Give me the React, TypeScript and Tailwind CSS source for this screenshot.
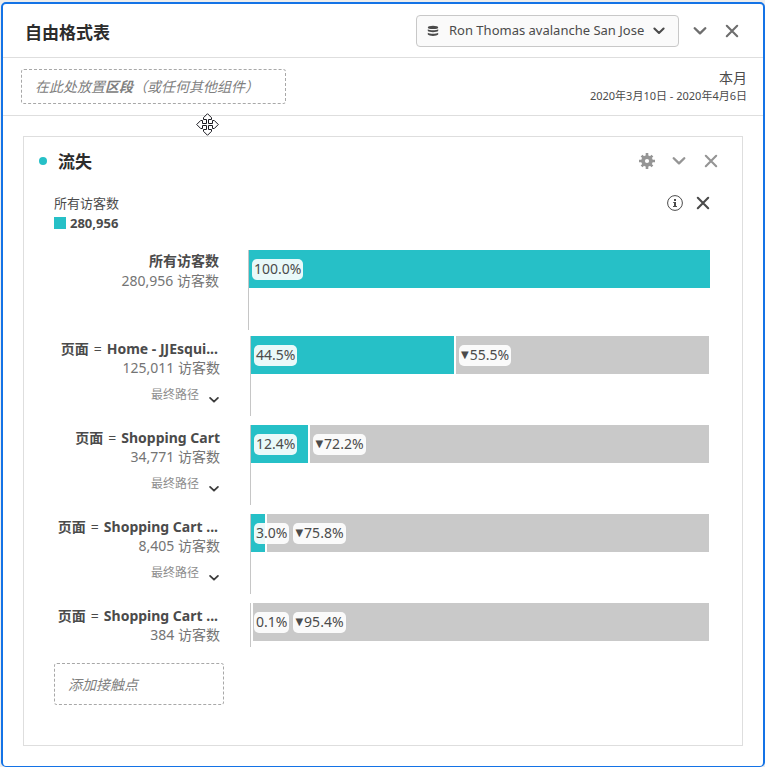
import type { ReactNode } from "react";

type Step = {
  prefix?: string;
  name: string;
  count: string;
  percent: number;
  label: string;
  fallout?: string;
  path?: boolean;
};

const steps: Step[] = [
  { name: "所有访客数", count: "280,956", percent: 100, label: "100.0%" },
  { prefix: "页面", name: "Home - JJEsqui...", count: "125,011", percent: 44.4, label: "44.5%", fallout: "55.5%", path: true },
  { prefix: "页面", name: "Shopping Cart", count: "34,771", percent: 12.4, label: "12.4%", fallout: "72.2%", path: true },
  { prefix: "页面", name: "Shopping Cart ...", count: "8,405", percent: 3, label: "3.0%", fallout: "75.8%", path: true },
  { prefix: "页面", name: "Shopping Cart ...", count: "384", percent: 0, label: "0.1%", fallout: "95.4%" },
];

function Chevron({ className }: { className: string }) {
  return (
    <svg viewBox="0 0 14 14" fill="none" stroke="currentColor" className={className} aria-hidden="true">
      <path d="M2.4 4.6 7 9 11.6 4.6" strokeWidth="2.1" strokeLinecap="round" strokeLinejoin="round" />
    </svg>
  );
}

function Cross({ className }: { className: string }) {
  return (
    <svg viewBox="0 0 14 14" fill="none" stroke="currentColor" className={className} aria-hidden="true">
      <path d="M1.8 1.8 12.2 12.2M12.2 1.8 1.8 12.2" strokeWidth="2.1" strokeLinecap="round" />
    </svg>
  );
}

function Gear() {
  return (
    <svg viewBox="0 0 16 16" className="size-4" aria-hidden="true">
      <g stroke="currentColor" strokeWidth="2.6">
        <path d="M8 0v16M0 8h16" />
        <path d="M2.6 2.6 13.4 13.4M13.4 2.6 2.6 13.4" />
      </g>
      <circle cx="8" cy="8" r="5.8" fill="currentColor" />
      <circle cx="8" cy="8" r="2.1" fill="white" />
    </svg>
  );
}

function Info() {
  return (
    <svg viewBox="0 0 16 16" className="size-4" aria-hidden="true">
      <circle cx="8" cy="8" r="7.4" fill="none" stroke="currentColor" strokeWidth="1" />
      <path d="M7 4h2v2H7zM6.2 7H9v4h1v1H6v-1h1V8h-.8z" fill="currentColor" />
    </svg>
  );
}

function Database() {
  return (
    <svg viewBox="0 0 12 12" className="size-3" fill="currentColor" aria-hidden="true">
      <ellipse cx="6" cy="2.4" rx="5.2" ry="1.7" />
      <path d="M.8 4.2c1.8 1.3 8.6 1.3 10.4 0v1.9c-1.2 1.5-9.2 1.5-10.4 0z" />
      <path d="M.8 7.7c1.8 1.3 8.6 1.3 10.4 0v1.9c-1.2 1.7-9.2 1.7-10.4 0z" />
    </svg>
  );
}

function MoveCursor() {
  return (
    <svg viewBox="0 0 23 23" className="absolute -bottom-[21px] left-[193px] size-[23px]" aria-hidden="true">
      <path
        d="M11.5.7 15.5 4.7V6.5H12.5V10.5H16.5V7.5H18.3L22.3 11.5 18.3 15.5H16.5V12.5H12.5V16.5H15.5V18.3L11.5 22.3 7.5 18.3V16.5H10.5V12.5H6.5V15.5H4.7L.7 11.5 4.7 7.5H6.5V10.5H10.5V6.5H7.5V4.7Z"
        fill="white"
        stroke="#1b1b22"
        strokeWidth="1"
      />
    </svg>
  );
}

function IconButton({ label, children }: { label: string; children: ReactNode }) {
  return (
    <button type="button" aria-label={label} className="flex size-4 items-center justify-center">
      {children}
    </button>
  );
}

function Pill({ children }: { children: ReactNode }) {
  return (
    <span className="flex h-[21px] items-center rounded-[5px] bg-white/90 px-[2px] text-sm whitespace-nowrap text-[#4b4b4b]">
      {children}
    </span>
  );
}

function StepRow({ step, first, last }: { step: Step; first: boolean; last: boolean }) {
  return (
    <div className={first ? "mb-[6px] flex pr-8 pl-[30px]" : last ? "flex pr-[33px] pl-[30px]" : "mb-[9px] flex pr-[33px] pl-[30px]"}>
      <div
        className={
          first
            ? "w-[165px] shrink-0 pt-px text-right text-sm/5"
            : "w-[166px] shrink-0 pt-[3px] text-right text-sm/[19px]"
        }
      >
        <div className={step.name.endsWith("...") ? "flex justify-end gap-[5px] pr-[2px] font-bold whitespace-nowrap text-[#4b4b4b]" : "flex justify-end gap-[5px] font-bold whitespace-nowrap text-[#4b4b4b]"}>
          {step.prefix && (
            <>
              <span>{step.prefix}</span>
              <span className="font-normal">=</span>
            </>
          )}
          <span>{step.name}</span>
        </div>
        <div className="text-[#747474]">{step.count} 访客数</div>
        {step.path && (
          <div className="relative mt-2 flex h-5 justify-end">
            <select
              aria-label="路径类型"
              className="h-5 w-[69px] appearance-none bg-transparent text-xs/5 text-[#8e8e8e]"
            >
              <option>最终路径</option>
            </select>
            <Chevron className="pointer-events-none absolute right-0 -bottom-px size-3 text-[#3c3c3c]" />
          </div>
        )}
      </div>
      <div
        className={
          last
            ? "ml-[30px] h-11 flex-1 border-l border-[#c6c6c6]"
            : first
              ? "ml-[29px] h-20 flex-1 border-l border-[#c6c6c6]"
              : "ml-[30px] h-20 flex-1 border-l border-[#c6c6c6]"
        }
      >
        <div className="relative h-[38px]">
          <div className="flex h-full">
            <div className="bg-[#26c0c7]" style={{ width: `${step.percent}%` }} />
            {step.fallout && <div className="ml-[2px] flex-1 bg-[#c9c9c9]" />}
          </div>
          <div className="absolute inset-0 flex items-center pl-[3px]">
            <div className="flex shrink-0 pr-1" style={{ minWidth: step.fallout ? `calc(${step.percent}% + 3px)` : undefined }}>
              <Pill>{step.label}</Pill>
            </div>
            {step.fallout && (
              <Pill>
                <span className="mr-px font-['DejaVu_Sans'] text-[10px]">▼</span>
                {step.fallout}
              </Pill>
            )}
          </div>
        </div>
      </div>
    </div>
  );
}

export default function App() {
  return (
    <div className="bg-[#ededed] pt-[2px] pl-px font-['Noto_Sans','Noto_Sans_CJK_SC',sans-serif]">
      <main className="rounded-[5px] border-2 border-b border-[#1473e6] bg-white">
        <header className="flex h-[54px] items-center border-b border-[#dedede] pr-[23px] pl-[22px]">
          <h1 className="pt-1 text-[17px] font-bold text-[#2c2c2c]">自由格式表</h1>
          <div className="relative ml-auto flex h-8 items-center text-[#4b4b4b]">
            <span className="pointer-events-none absolute left-[11px]">
              <Database />
            </span>
            <select
              aria-label="报表包"
              className="h-8 w-[263px] appearance-none rounded border border-[#c8c8c8] bg-[#fafafa] pr-7 pl-8 text-[13px]"
            >
              <option>Ron Thomas avalanche San Jose</option>
            </select>
            <Chevron className="pointer-events-none absolute right-[13px] size-[14px]" />
          </div>
          <div className="ml-[13px] flex gap-4 text-[#6e6e6e]">
            <IconButton label="折叠面板">
              <Chevron className="size-4" />
            </IconButton>
            <IconButton label="关闭面板">
              <Cross className="size-[14px]" />
            </IconButton>
          </div>
        </header>

        <section className="relative flex h-[58px] items-center justify-between border-b border-[#dedede] pr-4 pl-[18px]">
          <div className="flex h-[35px] w-[265px] items-center rounded-[3px] border border-dashed border-[#a8a8a8] pt-px pl-[13px] text-sm whitespace-nowrap text-[#808080] italic">
            在此处放置<b>区段</b>（或任何其他组件）
          </div>
          <div className="pb-[2px] text-right text-[#4b4b4b]">
            <div className="text-sm/5">本月</div>
            <div className="text-[11px]/4">2020年3月10日 - 2020年4月6日</div>
          </div>
          <MoveCursor />
        </section>

        <section className="mx-5 mt-5 mb-5 border border-[#dedede]">
          <div className="flex h-12 items-center pr-[23px] pl-[15px]">
            <span className="size-2 rounded-full bg-[#26c0c7]" />
            <h2 className="ml-[11px] pt-[2px] text-[17px] font-bold text-[#2c2c2c]">流失</h2>
            <div className="ml-auto flex gap-4 text-[#959595]">
              <IconButton label="设置">
                <Gear />
              </IconButton>
              <IconButton label="折叠可视化">
                <Chevron className="size-4" />
              </IconButton>
              <IconButton label="关闭可视化">
                <Cross className="size-[14px]" />
              </IconButton>
            </div>
          </div>

          <div className="mt-2 mb-[17px] flex justify-between pr-[31px] pl-[30px] text-[13px]/5 text-[#4b4b4b]">
            <div>
              <div>所有访客数</div>
              <div className="flex items-center gap-1 font-bold">
                <span className="size-3 bg-[#26c0c7]" />
                280,956
              </div>
            </div>
            <div className="flex h-5 items-center gap-3">
              <IconButton label="信息">
                <Info />
              </IconButton>
              <IconButton label="移除区段">
                <Cross className="size-[14px]" />
              </IconButton>
            </div>
          </div>

          {steps.map((step, i) => (
            <StepRow key={i} step={step} first={i === 0} last={i === steps.length - 1} />
          ))}

          <div className="mt-4 mb-10 ml-[30px] flex h-[42px] w-[170px] items-center rounded-[3px] border border-dashed border-[#a8a8a8] pt-[2px] pl-[13px] text-sm text-[#808080] italic">
            添加接触点
          </div>
        </section>
      </main>
    </div>
  );
}
